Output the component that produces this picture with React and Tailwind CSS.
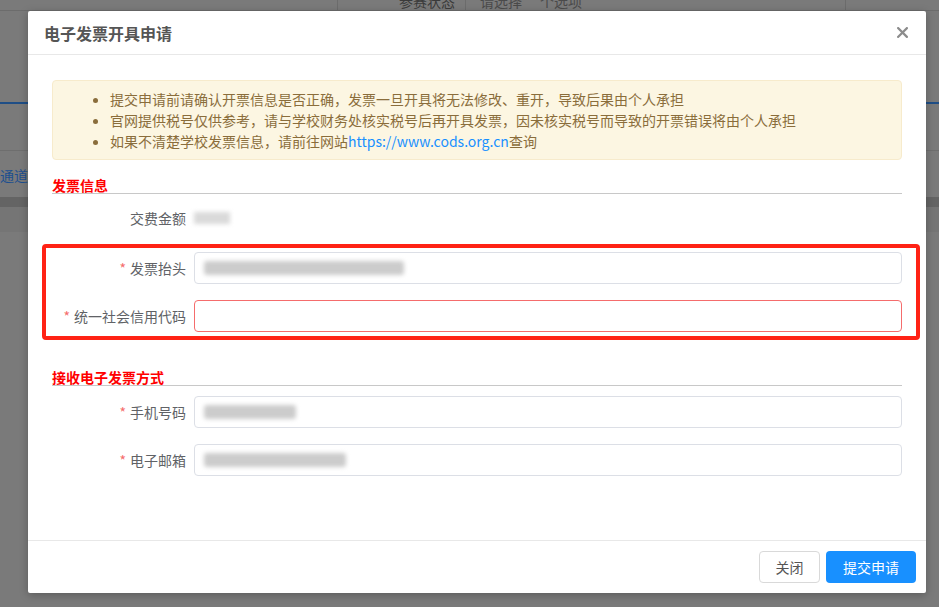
import React from 'react';

const font = { fontFamily: '"Noto Sans CJK SC", "Noto Sans", sans-serif' };

const FormRow = ({ label, required, children, className = '' }) => (
  <div className={`flex items-center h-[32px] ${className}`}>
    <div className="w-[142px] pr-[8px] flex justify-end items-center text-[14px] text-[#606266] leading-[32px]">
      {required && <span className="text-[#f56c6c] mr-[4px]">*</span>}
      <span>{label}</span>
    </div>
    <div className="flex-1 h-full">{children}</div>
  </div>
);

const Input = ({ error, blurWidth }) => (
  <div
    className={`h-full rounded-[4px] border flex items-center pl-[9px] ${
      error ? 'border-[#f56c6c]' : 'border-[#dcdfe6]'
    }`}
  >
    {blurWidth && (
      <span
        className="h-[14px] bg-[#cccccc] blur-[2px] rounded-[3px]"
        style={{ width: blurWidth }}
      />
    )}
  </div>
);

const SectionTitle = ({ children, className = '' }) => (
  <div className={`border-b border-[#c8c8c8] text-[14px] leading-[16px] font-bold text-[#ff0000] ${className}`}>
    {children}
  </div>
);

export default function App() {
  return (
    <div className="relative w-[939px] h-[607px] overflow-hidden bg-[#7a7a7a]" style={font}>
      {/* dimmed page behind the dialog */}
      <div className="flex flex-col text-[14px]">
        <div className="flex h-[11px] border-b border-[#6c6c6c] overflow-hidden">
          <div className="w-[338px] border-r border-[#6c6c6c]" />
          <div className="w-[128px] border-r border-[#6c6c6c] flex justify-end pr-[10px]">
            <span className="-mt-[9px] leading-[20px] text-[#3a3a3a]">参赛状态</span>
          </div>
          <div className="w-[380px] border-r border-[#6c6c6c] pl-[14px] flex gap-[18px]">
            <span className="-mt-[9px] leading-[20px] text-[#4a4a4a]">请选择</span>
            <span className="-mt-[9px] leading-[20px] text-[#4a4a4a]">个选项</span>
          </div>
        </div>
        <div className="h-[91px]" />
        <div className="h-[2px] bg-[#1f4e86]" />
        <div className="h-[46px]" />
        <div className="h-[1px] bg-[#6e6e6e]" />
        <div className="h-[46px] flex items-center">
          <span className="text-[#1d4f8f] leading-[20px] mt-[1px]">通道</span>
        </div>
        <div className="h-[10px] bg-[#646464]" />
        <div className="h-[25px] bg-[#757575]" />
      </div>

      {/* dialog */}
      <div className="absolute left-[28px] top-[11px] w-[898px] h-[582px] bg-white rounded-[2px] shadow-[0_2px_8px_rgba(0,0,0,0.25)] flex flex-col">
        <div className="h-[44px] shrink-0 border-b border-[#e8e8e8] flex items-center justify-between pl-[16px] pr-[18px]">
          <span className="text-[16px] font-bold text-[#555555] leading-[22px]">电子发票开具申请</span>
          <svg width="11" height="11" viewBox="0 0 10 10" className="text-[#8c8c8c]">
            <path d="M1 1 L9 9 M9 1 L1 9" stroke="currentColor" strokeWidth="2" strokeLinecap="square" />
          </svg>
        </div>

        <div className="flex-1 px-[24px] pt-[25px]">
          <div className="h-[80px] rounded-[4px] border border-[#f7ebcc] bg-[#fcf6e2] pt-[8px]">
            <ul className="list-disc pl-[57px] text-[14px] leading-[21px] text-[#8a6d3b] marker:text-[#8a6d3b]">
              <li>提交申请前请确认开票信息是否正确，发票一旦开具将无法修改、重开，导致后果由个人承担</li>
              <li>官网提供税号仅供参考，请与学校财务处核实税号后再开具发票，因未核实税号而导致的开票错误将由个人承担</li>
              <li>
                如果不清楚学校发票信息，请前往网站
                <span className="text-[#1890ff]">https://www.cods.org.cn</span>
                查询
              </li>
            </ul>
          </div>

          <SectionTitle className="mt-[17px]">发票信息</SectionTitle>

          <FormRow label="交费金额" className="mt-[8px]">
            <div className="h-full flex items-center">
              <span className="w-[36px] h-[12px] bg-[#dadada] blur-[2px]" />
            </div>
          </FormRow>
          <FormRow label="发票抬头" required className="mt-[18px]">
            <Input blurWidth={200} />
          </FormRow>
          <FormRow label="统一社会信用代码" required className="mt-[16px]">
            <Input error />
          </FormRow>

          <SectionTitle className="mt-[37px]">接收电子发票方式</SectionTitle>

          <FormRow label="手机号码" required className="mt-[10px]">
            <Input blurWidth={92} />
          </FormRow>
          <FormRow label="电子邮箱" required className="mt-[16px]">
            <Input blurWidth={142} />
          </FormRow>
        </div>

        <div className="h-[53px] shrink-0 border-t border-[#e8e8e8] flex items-center justify-end gap-[6px] pr-[10px]">
          <button className="w-[61px] h-[32px] rounded-[4px] border border-[#d9d9d9] bg-white text-[14px] text-[#555555]">
            关闭
          </button>
          <button className="w-[90px] h-[32px] rounded-[4px] bg-[#1890ff] text-[14px] text-white">
            提交申请
          </button>
        </div>

        {/* red highlight annotation */}
        <div className="absolute left-[14px] top-[233px] w-[878px] h-[96px] border-[4px] border-[#ff2215] rounded-[4px] pointer-events-none" />
      </div>
    </div>
  );
}
